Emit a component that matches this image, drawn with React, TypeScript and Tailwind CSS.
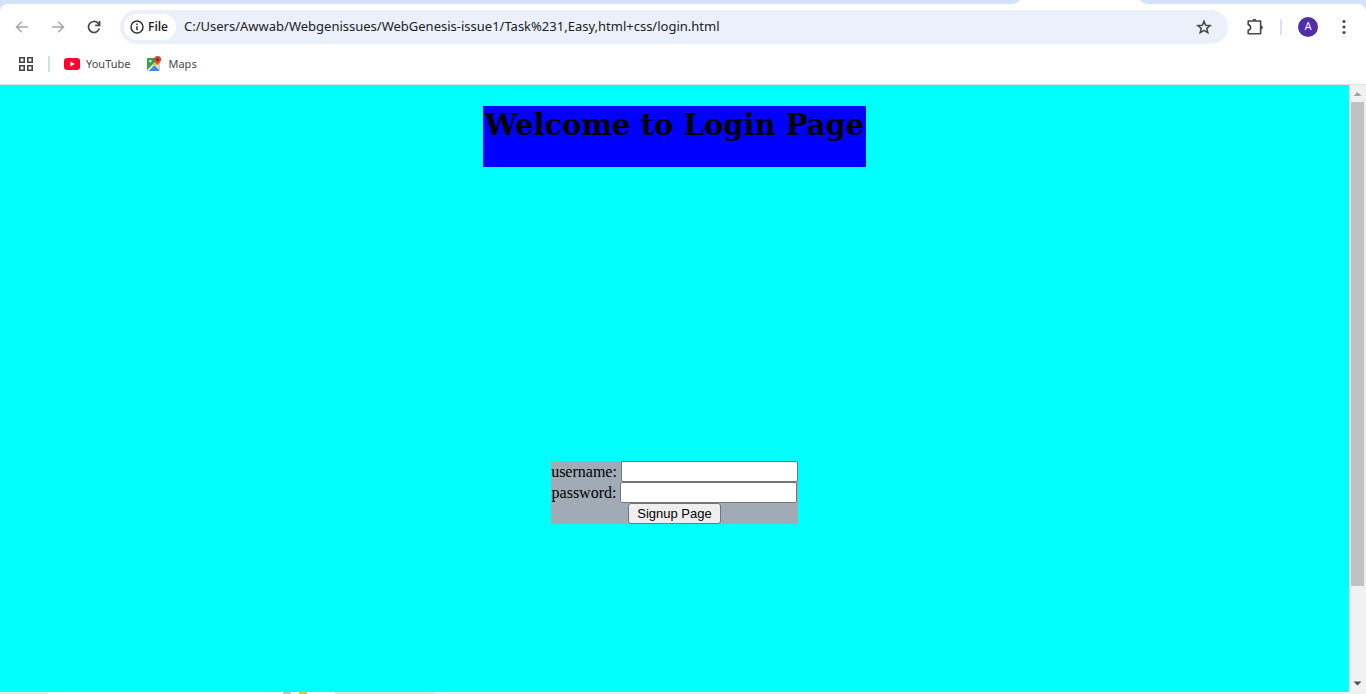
import React from "react";

function TabStrip() {
  return (
    <div className="flex h-1 justify-end pr-[218px]">
      <svg className="h-1 w-[134px]" viewBox="0 0 134 4" aria-hidden="true">
        <path d="M-4 4Q3 4 6 0H126Q129 4 136 4Z" fill="#fff" />
      </svg>
    </div>
  );
}

function ArrowIcon({ flip = false }: { flip?: boolean }) {
  return (
    <svg width="14" height="14" viewBox="0 0 14 14" fill="none" stroke="#a5a7a9" strokeWidth="1.5" aria-hidden="true">
      {flip ? <path d="M1 7h11.5M7.2 1.7 12.5 7l-5.3 5.3" /> : <path d="M13 7H1.5M6.8 1.7 1.5 7l5.3 5.3" />}
    </svg>
  );
}

function ReloadIcon() {
  return (
    <svg width="14" height="14" viewBox="0 0 14 14" fill="none" stroke="#444746" strokeWidth="1.7" aria-hidden="true">
      <path d="M12.3 8.4A5.5 5.5 0 1 1 11 3.2l1.7 1.7" />
      <path d="M12.6 1v4.3H8.2" />
    </svg>
  );
}

function InfoIcon() {
  return (
    <svg width="14" height="14" viewBox="0 0 14 14" fill="none" stroke="#303134" strokeWidth="1.5" aria-hidden="true">
      <circle cx="7" cy="7" r="6" />
      <path d="M7 6.3v4M7 3.5v1.6" />
    </svg>
  );
}

function StarIcon() {
  return (
    <svg width="16" height="16" viewBox="0 0 16 16" fill="none" stroke="#444746" strokeWidth="1.5" strokeLinejoin="miter" aria-hidden="true">
      <path d="m8 2.2 1.6 4 4.5.3-3.4 2.8 1.1 4.3L8 11.3l-3.8 2.3 1.1-4.3-3.4-2.8 4.5-.3Z" />
    </svg>
  );
}

function PuzzleIcon() {
  return (
    <svg width="18" height="18" viewBox="0 0 18 18" aria-hidden="true">
      <path d="M2.2 3H14.6V15.8H2.2V12.2C5.4 11.4 5.4 7.4 2.2 6.6Z" fill="none" stroke="#444746" strokeWidth="1.6" strokeLinejoin="round" />
      <path d="M6.4 2.6a2 1.8 0 0 1 4 0ZM15 7.4a1.8 2 0 0 1 0 4Z" fill="#444746" />
    </svg>
  );
}

function MenuIcon() {
  return (
    <svg width="4" height="16" viewBox="0 0 4 16" fill="#444746" aria-hidden="true">
      <circle cx="2" cy="2.5" r="1.6" />
      <circle cx="2" cy="8" r="1.6" />
      <circle cx="2" cy="13.5" r="1.6" />
    </svg>
  );
}

function AppsIcon() {
  return (
    <svg width="14" height="14" viewBox="0 0 14 14" fill="none" stroke="#444746" strokeWidth="1.6" aria-hidden="true">
      <path d="M.8.8h4.4v4.4H.8zM8.8.8h4.4v4.4H8.8zM.8 8.8h4.4v4.4H.8zM8.8 8.8h4.4v4.4H8.8z" />
    </svg>
  );
}

function YouTubeIcon() {
  return (
    <svg width="16" height="12" viewBox="0 0 16 12" aria-hidden="true">
      <rect width="16" height="12" rx="3" fill="#ff0033" />
      <path d="M6.4 3.4v5.2L10.8 6z" fill="#fff" />
    </svg>
  );
}

function MapsIcon() {
  return (
    <svg width="16" height="16" viewBox="0 0 16 16" aria-hidden="true">
      <clipPath id="map-tile">
        <rect x="1" y="2" width="12.5" height="13" rx="1.2" />
      </clipPath>
      <g clipPath="url(#map-tile)">
        <path d="M1 2h13v13H1z" fill="#2fa04e" />
        <path d="M7.5 8.5 14 2v13z" fill="#dadce0" />
        <path d="M2.5 15.5 8 9.8l5.5 5.7z" fill="#4285f4" />
        <path d="M1 14 8 7l1.2 1.6L2.2 15.5H1z" fill="#e8eaed" />
        <path d="M7 8 11 4l1 2-4 4z" fill="#fbbc04" />
      </g>
      <path d="M5.8 4.9H4.3v.8h.7a1 1 0 1 1-.2-1.3" fill="none" stroke="#fff" strokeWidth=".8" />
      <path d="M11.6 0a3.6 3.6 0 0 1 3.6 3.6c0 2.4-2.6 3.3-3.6 6-1-2.7-3.6-3.6-3.6-6A3.6 3.6 0 0 1 11.6 0Z" fill="#db4437" />
      <circle cx="11.6" cy="3.6" r="1.3" fill="#7b241c" />
    </svg>
  );
}

function Toolbar() {
  return (
    <div className="flex h-[46px] items-center pl-[15px] pr-5">
      <button type="button" aria-label="Back"><ArrowIcon /></button>
      <button type="button" aria-label="Forward" className="ml-[22px]"><ArrowIcon flip /></button>
      <button type="button" aria-label="Reload" className="ml-[22px]"><ReloadIcon /></button>
      <div className="ml-[19px] flex h-[34px] flex-1 items-center rounded-full bg-[#ebf0fa] pl-1 pr-4">
        <button type="button" className="flex h-[26px] items-center gap-1 rounded-full bg-white pl-1.5 pr-2 font-['Open_Sans',sans-serif] text-xs font-semibold text-[#202124]">
          <InfoIcon />
          File
        </button>
        <input
          type="text"
          aria-label="Address"
          defaultValue="C:/Users/Awwab/Webgenissues/WebGenesis-issue1/Task%231,Easy,html+css/login.html"
          className="ml-2 min-w-0 flex-1 bg-transparent font-['Noto_Sans',sans-serif] text-[13px] text-[#202124] outline-none"
        />
        <button type="button" aria-label="Bookmark"><StarIcon /></button>
      </div>
      <button type="button" aria-label="Extensions" className="ml-[18px]"><PuzzleIcon /></button>
      <span className="ml-4 h-4 w-0.5 bg-[#d3e3fd]" />
      <button type="button" aria-label="Profile" className="ml-4 size-5 rounded-full bg-[#512da8] font-[Roboto,sans-serif] text-[11px] leading-5 text-white">A</button>
      <button type="button" aria-label="Menu" className="ml-6"><MenuIcon /></button>
    </div>
  );
}

function Bookmarks() {
  return (
    <nav className="flex h-7 items-center pl-[19px] font-['Noto_Sans',sans-serif] text-[11px] text-[#444746]">
      <button type="button" aria-label="Apps"><AppsIcon /></button>
      <span className="ml-[15px] h-4 w-0.5 bg-[#c7e0f4]" />
      <a href="#youtube" className="ml-3.5 flex items-center gap-1.5"><YouTubeIcon />YouTube</a>
      <a href="#maps" className="ml-4 flex items-center gap-1.5"><MapsIcon />Maps</a>
    </nav>
  );
}

function Scrollbar() {
  return (
    <div className="flex w-[17px] flex-col items-center bg-[#f1f1f1]" aria-hidden="true">
      <svg width="17" height="17" viewBox="0 0 17 17"><path d="M4.5 11h8l-4-4z" fill="#a3a3a3" /></svg>
      <div className="w-[13px] grow-[484] bg-[#c1c1c1]" />
      <div className="grow-[89]" />
      <svg width="17" height="17" viewBox="0 0 17 17"><path d="M4.5 6.5h8l-4 4z" fill="#505050" /></svg>
    </div>
  );
}

const inputClass = "h-[21px] w-[177px] rounded-[2px] border border-[#767676] bg-white px-0.5 font-['Liberation_Sans',sans-serif] text-[13px] outline-none";

function LoginPage() {
  return (
    <main className="flex flex-1 flex-col items-center bg-[#00ffff] pt-[21px] font-['Liberation_Serif',serif] text-black">
      <h1 className="h-[61px] whitespace-nowrap bg-[#0000ff] px-0.5 font-['DejaVu_Serif',serif] text-[29px] font-bold leading-[38px]">Welcome to Login Page</h1>
      <form className="mt-[294px] flex flex-col items-center bg-[#a0abb6] text-base" onSubmit={(e) => e.preventDefault()}>
        <div className="flex h-[21px] items-center gap-1">
          <label htmlFor="username" className="leading-5">username:</label>
          <input id="username" type="text" className={inputClass} />
        </div>
        <div className="flex h-[21px] items-center gap-1">
          <label htmlFor="password" className="leading-5">password:</label>
          <input id="password" type="password" className={inputClass} />
        </div>
        <button type="submit" className="h-[21px] rounded-[3px] border border-[#767676] bg-[#efefef] px-2 font-['Liberation_Sans',sans-serif] text-[13px] leading-[19px]">
          Signup Page
        </button>
      </form>
    </main>
  );
}

export default function App() {
  return (
    <div className="flex min-h-screen flex-col bg-[#d3e3fd]">
      <TabStrip />
      <header className="rounded-t-lg border-b border-[#d5e5e8] bg-white pb-1.5">
        <Toolbar />
        <Bookmarks />
      </header>
      <div className="flex flex-1">
        <LoginPage />
        <Scrollbar />
      </div>
      <footer className="flex h-0.5 bg-[#f1efe9]" aria-hidden="true">
        <span className="w-12 bg-[#e8e4d8]" />
        <span className="w-[235px] bg-white" />
        <span className="w-2 bg-[#b8cdb0]" />
        <span className="w-2 bg-white" />
        <span className="w-2 bg-[#d8c84a]" />
        <span className="w-7 bg-white" />
        <span className="w-[100px] bg-[#dfe3d3]" />
      </footer>
    </div>
  );
}
